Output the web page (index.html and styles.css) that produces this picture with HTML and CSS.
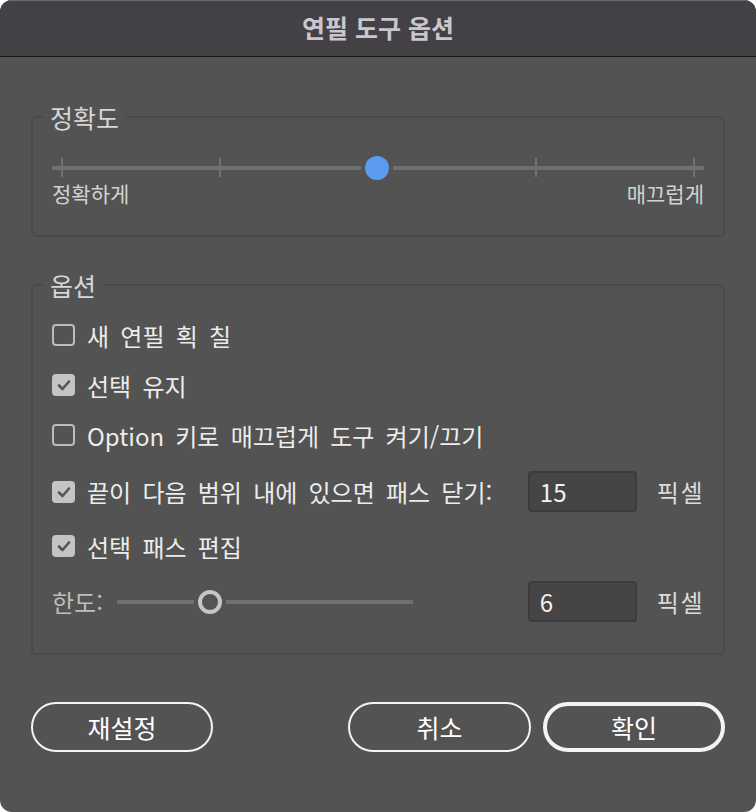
FILE: index.html
```html
<!DOCTYPE html>
<html lang="ko">
<head>
<meta charset="utf-8">
<title>연필 도구 옵션</title>
<link rel="stylesheet" href="styles.css">
</head>
<body>
<div class="dialog">
  <div class="titlebar">연필 도구 옵션</div>
  <div class="content">
    <fieldset class="group group-accuracy">
      <legend>정확도</legend>
      <div class="slider">
        <div class="track"></div>
        <span class="tick" style="left:10px"></span>
        <span class="tick" style="left:168px"></span>
        <span class="tick" style="left:325px"></span>
        <span class="tick" style="left:484px"></span>
        <span class="tick" style="left:642px"></span>
        <span class="thumb" style="left:313px"></span>
      </div>
      <div class="scale-labels"><span>정확하게</span><span>매끄럽게</span></div>
    </fieldset>

    <fieldset class="group group-options">
      <legend>옵션</legend>
      <div class="rows">
        <div class="row">
          <span class="checkbox"></span>
          <span class="label">새 연필 획 칠</span>
        </div>
        <div class="row">
          <span class="checkbox checked"><svg viewBox="0 0 22 22"><path d="M6 11.5 L9.5 15 L16 7.5"/></svg></span>
          <span class="label">선택 유지</span>
        </div>
        <div class="row">
          <span class="checkbox"></span>
          <span class="label">Option 키로 매끄럽게 도구 켜기/끄기</span>
        </div>
        <div class="row row-field">
          <span class="checkbox checked"><svg viewBox="0 0 22 22"><path d="M6 11.5 L9.5 15 L16 7.5"/></svg></span>
          <span class="label">끝이 다음 범위 내에 있으면 패스 닫기:</span>
          <span class="field">15</span>
          <span class="unit">픽셀</span>
        </div>
        <div class="row row-spaced">
          <span class="checkbox checked"><svg viewBox="0 0 22 22"><path d="M6 11.5 L9.5 15 L16 7.5"/></svg></span>
          <span class="label">선택 패스 편집</span>
        </div>
        <div class="row row-field row-limit">
          <span class="dim-label">한도:</span>
          <div class="mini-slider">
            <div class="mini-track"></div>
            <span class="mini-thumb" style="left:81px"></span>
          </div>
          <span class="field">6</span>
          <span class="unit">픽셀</span>
        </div>
      </div>
    </fieldset>

    <div class="buttons">
      <button class="btn">재설정</button>
      <button class="btn btn-cancel">취소</button>
      <button class="btn btn-default">확인</button>
    </div>
  </div>
</div>
</body>
</html>
```

FILE: styles.css
```css
* { box-sizing: border-box; }

html, body {
  margin: 0;
  padding: 0;
  background: #ffffff;
}

body {
  font-family: "Noto Sans CJK KR", "Noto Sans", sans-serif;
  width: 756px;
  height: 812px;
  overflow: hidden;
}

.dialog {
  width: 756px;
  height: 812px;
  background: #535353;
  border-radius: 12px;
  overflow: hidden;
  display: flex;
  flex-direction: column;
}

.titlebar {
  height: 57px;
  flex: none;
  background: #434145;
  border-top: 1px solid #6a696d;
  border-bottom: 1px solid #151515;
  color: #c9c7cc;
  font-size: 25px;
  font-weight: 700;
  line-height: 52px;
  text-align: center;
}

.content {
  padding: 0 31px;
  display: flex;
  flex-direction: column;
}

.group {
  margin: 0;
  padding: 0 19px;
  border: 2px solid #4a4a4a;
  border-radius: 5px;
  min-inline-size: 0;
}

.group legend {
  font-size: 25px;
  line-height: 26px;
  color: #d6d6d6;
  padding: 0 7px;
  margin-left: -9px;
}

.group-accuracy {
  margin-top: 47px;
  padding-bottom: 31px;
}

.slider {
  position: relative;
  height: 24px;
  margin-top: 26px;
}

.track {
  position: absolute;
  left: 0;
  right: 0;
  top: 10px;
  height: 4px;
  background: #707070;
}

.tick {
  position: absolute;
  top: 2px;
  width: 2px;
  height: 19px;
  margin-left: -1px;
  background: #707070;
}

.thumb {
  position: absolute;
  top: 0;
  width: 24px;
  height: 24px;
  border-radius: 50%;
  background: #5b9bf0;
  box-shadow: 0 0 0 4px #535353;
}

.scale-labels {
  margin-top: 2px;
  display: flex;
  justify-content: space-between;
  font-size: 21px;
  line-height: 22px;
  color: #d2d2d2;
}

.group-options {
  margin-top: 35px;
  padding-bottom: 31px;
}

.rows {
  margin-top: 17px;
  display: flex;
  flex-direction: column;
  gap: 10px;
}

.row {
  display: flex;
  align-items: center;
  height: 40px;
  font-size: 24px;
  color: #ececec;
}

.row-field {
  height: 41px;
  margin-top: 6px;
}

.row-spaced {
  margin-top: 4px;
}

.row-limit {
  margin-top: 5px;
}

.checkbox {
  flex: none;
  width: 23px;
  height: 22px;
  border: 2px solid #bcbcbc;
  border-radius: 4px;
  margin-right: 12px;
  display: flex;
  align-items: center;
  justify-content: center;
}

.checkbox.checked {
  background: #c4c4c4;
  border-color: #c4c4c4;
}

.checkbox svg {
  width: 22px;
  height: 22px;
  flex: none;
}

.checkbox svg path {
  fill: none;
  stroke: #555555;
  stroke-width: 2.6;
  stroke-linecap: round;
  stroke-linejoin: round;
}

.label {
  white-space: nowrap;
  word-spacing: 4.5px;
}

.field {
  margin-left: auto;
  flex: none;
  width: 109px;
  height: 41px;
  background: #454545;
  border: 2px solid #3c3c3c;
  border-radius: 4px;
  padding-left: 10px;
  line-height: 37px;
  color: #f2f2f2;
  font-size: 24px;
}

.unit {
  flex: none;
  margin-left: 20px;
  white-space: nowrap;
  color: #dadada;
  font-size: 24px;
  letter-spacing: 1.5px;
}

.dim-label {
  color: #bdbdbd;
  width: 65px;
  flex: none;
}

.mini-slider {
  position: relative;
  flex: none;
  width: 296px;
  height: 24px;
}

.mini-track {
  position: absolute;
  left: 0;
  right: 0;
  top: 10px;
  height: 4px;
  background: #707070;
}

.mini-thumb {
  position: absolute;
  top: 0;
  width: 24px;
  height: 24px;
  border-radius: 50%;
  border: 4px solid #c6c6c6;
  background: #535353;
  box-shadow: 0 0 0 4px #535353;
}

.buttons {
  margin-top: 47px;
  display: flex;
  gap: 12px;
}

.btn {
  width: 182px;
  height: 50px;
  border-radius: 25px;
  border: 2px solid #f4f4f4;
  background: transparent;
  color: #ffffff;
  font-family: "Noto Sans CJK KR", "Noto Sans", sans-serif;
  font-size: 25px;
  padding: 0;
}

.btn-cancel {
  margin-left: auto;
  width: 183px;
}

.btn-default {
  border-width: 4px;
}
```
